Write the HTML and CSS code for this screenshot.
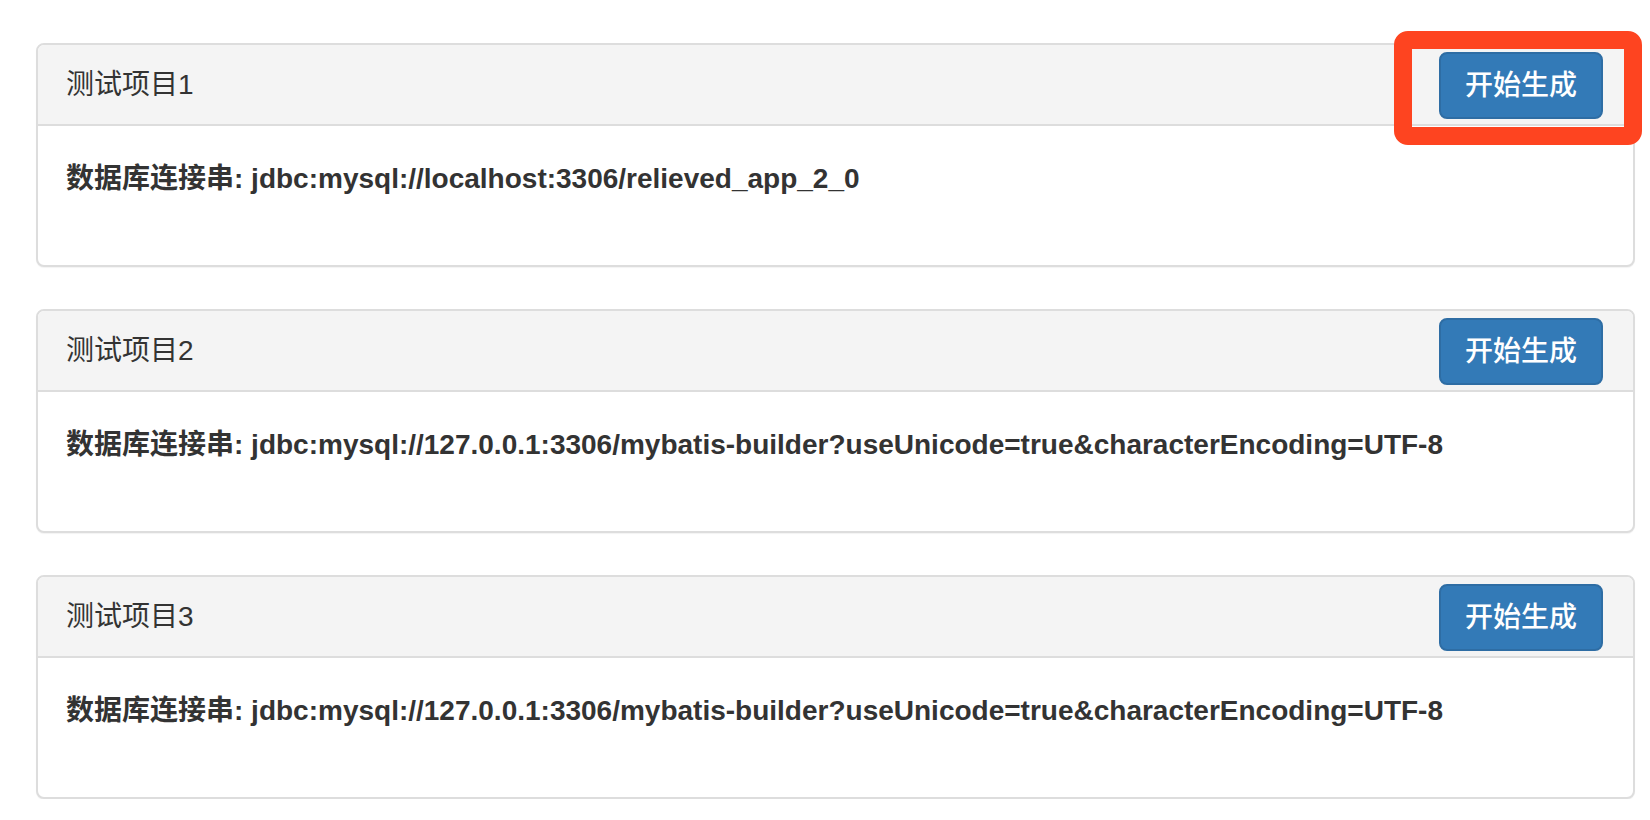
FILE: index.html
```html
<!DOCTYPE html>
<html lang="zh-CN">
<head>
<meta charset="utf-8">
<title>项目列表</title>
<link rel="stylesheet" href="styles.css">
</head>
<body>
<div class="page">
  <div class="panel">
    <div class="panel-heading">
      <span class="panel-title">测试项目1</span>
      <button class="btn">开始生成</button>
    </div>
    <div class="panel-body">
      <p class="conn">数据库连接串: jdbc:mysql://localhost:3306/relieved_app_2_0</p>
    </div>
    <div class="highlight"></div>
  </div>
  <div class="panel">
    <div class="panel-heading">
      <span class="panel-title">测试项目2</span>
      <button class="btn">开始生成</button>
    </div>
    <div class="panel-body">
      <p class="conn">数据库连接串: jdbc:mysql://127.0.0.1:3306/mybatis-builder?useUnicode=true&amp;characterEncoding=UTF-8</p>
    </div>
  </div>
  <div class="panel">
    <div class="panel-heading">
      <span class="panel-title">测试项目3</span>
      <button class="btn">开始生成</button>
    </div>
    <div class="panel-body">
      <p class="conn">数据库连接串: jdbc:mysql://127.0.0.1:3306/mybatis-builder?useUnicode=true&amp;characterEncoding=UTF-8</p>
    </div>
  </div>
</div>
</body>
</html>
```
FILE: styles.css
```css
html, body {
  margin: 0;
  padding: 0;
  background: #ffffff;
}

body {
  font-family: "Liberation Sans", "Noto Sans CJK SC", sans-serif;
  color: #333333;
  font-size: 28px;
  line-height: 40px;
}

.page {
  padding: 43px 15px 0 36px;
  display: flex;
  flex-direction: column;
  gap: 42px;
}

.panel {
  position: relative;
  border: 2px solid #dddddd;
  border-radius: 8px;
  background: #ffffff;
  box-shadow: 0 1px 1px rgba(0, 0, 0, 0.05);
}

.panel-heading {
  height: 81px;
  box-sizing: border-box;
  padding: 0 30px 0 28px;
  display: flex;
  align-items: center;
  justify-content: space-between;
  background: #f4f4f4;
  border-bottom: 2px solid #dddddd;
  border-radius: 6px 6px 0 0;
}

.panel-title {
  font-size: 28px;
  font-weight: normal;
  color: #333333;
}

.btn {
  margin-top: 2px;
  height: 67px;
  padding: 0 24px;
  font-family: "Liberation Sans", "Noto Sans CJK SC", sans-serif;
  font-size: 28px;
  font-weight: 500;
  line-height: 40px;
  color: #ffffff;
  background: #337ab7;
  border: 2px solid #2e6da4;
  border-radius: 8px;
}

.panel-body {
  padding: 33px 30px 66px 28px;
}

.conn {
  margin: 0;
  font-weight: bold;
  line-height: 40px;
}

.highlight {
  position: absolute;
  top: -14px;
  right: -9px;
  width: 248px;
  height: 114px;
  box-sizing: border-box;
  border: 18px solid #fe4420;
  border-radius: 14px;
}
```
